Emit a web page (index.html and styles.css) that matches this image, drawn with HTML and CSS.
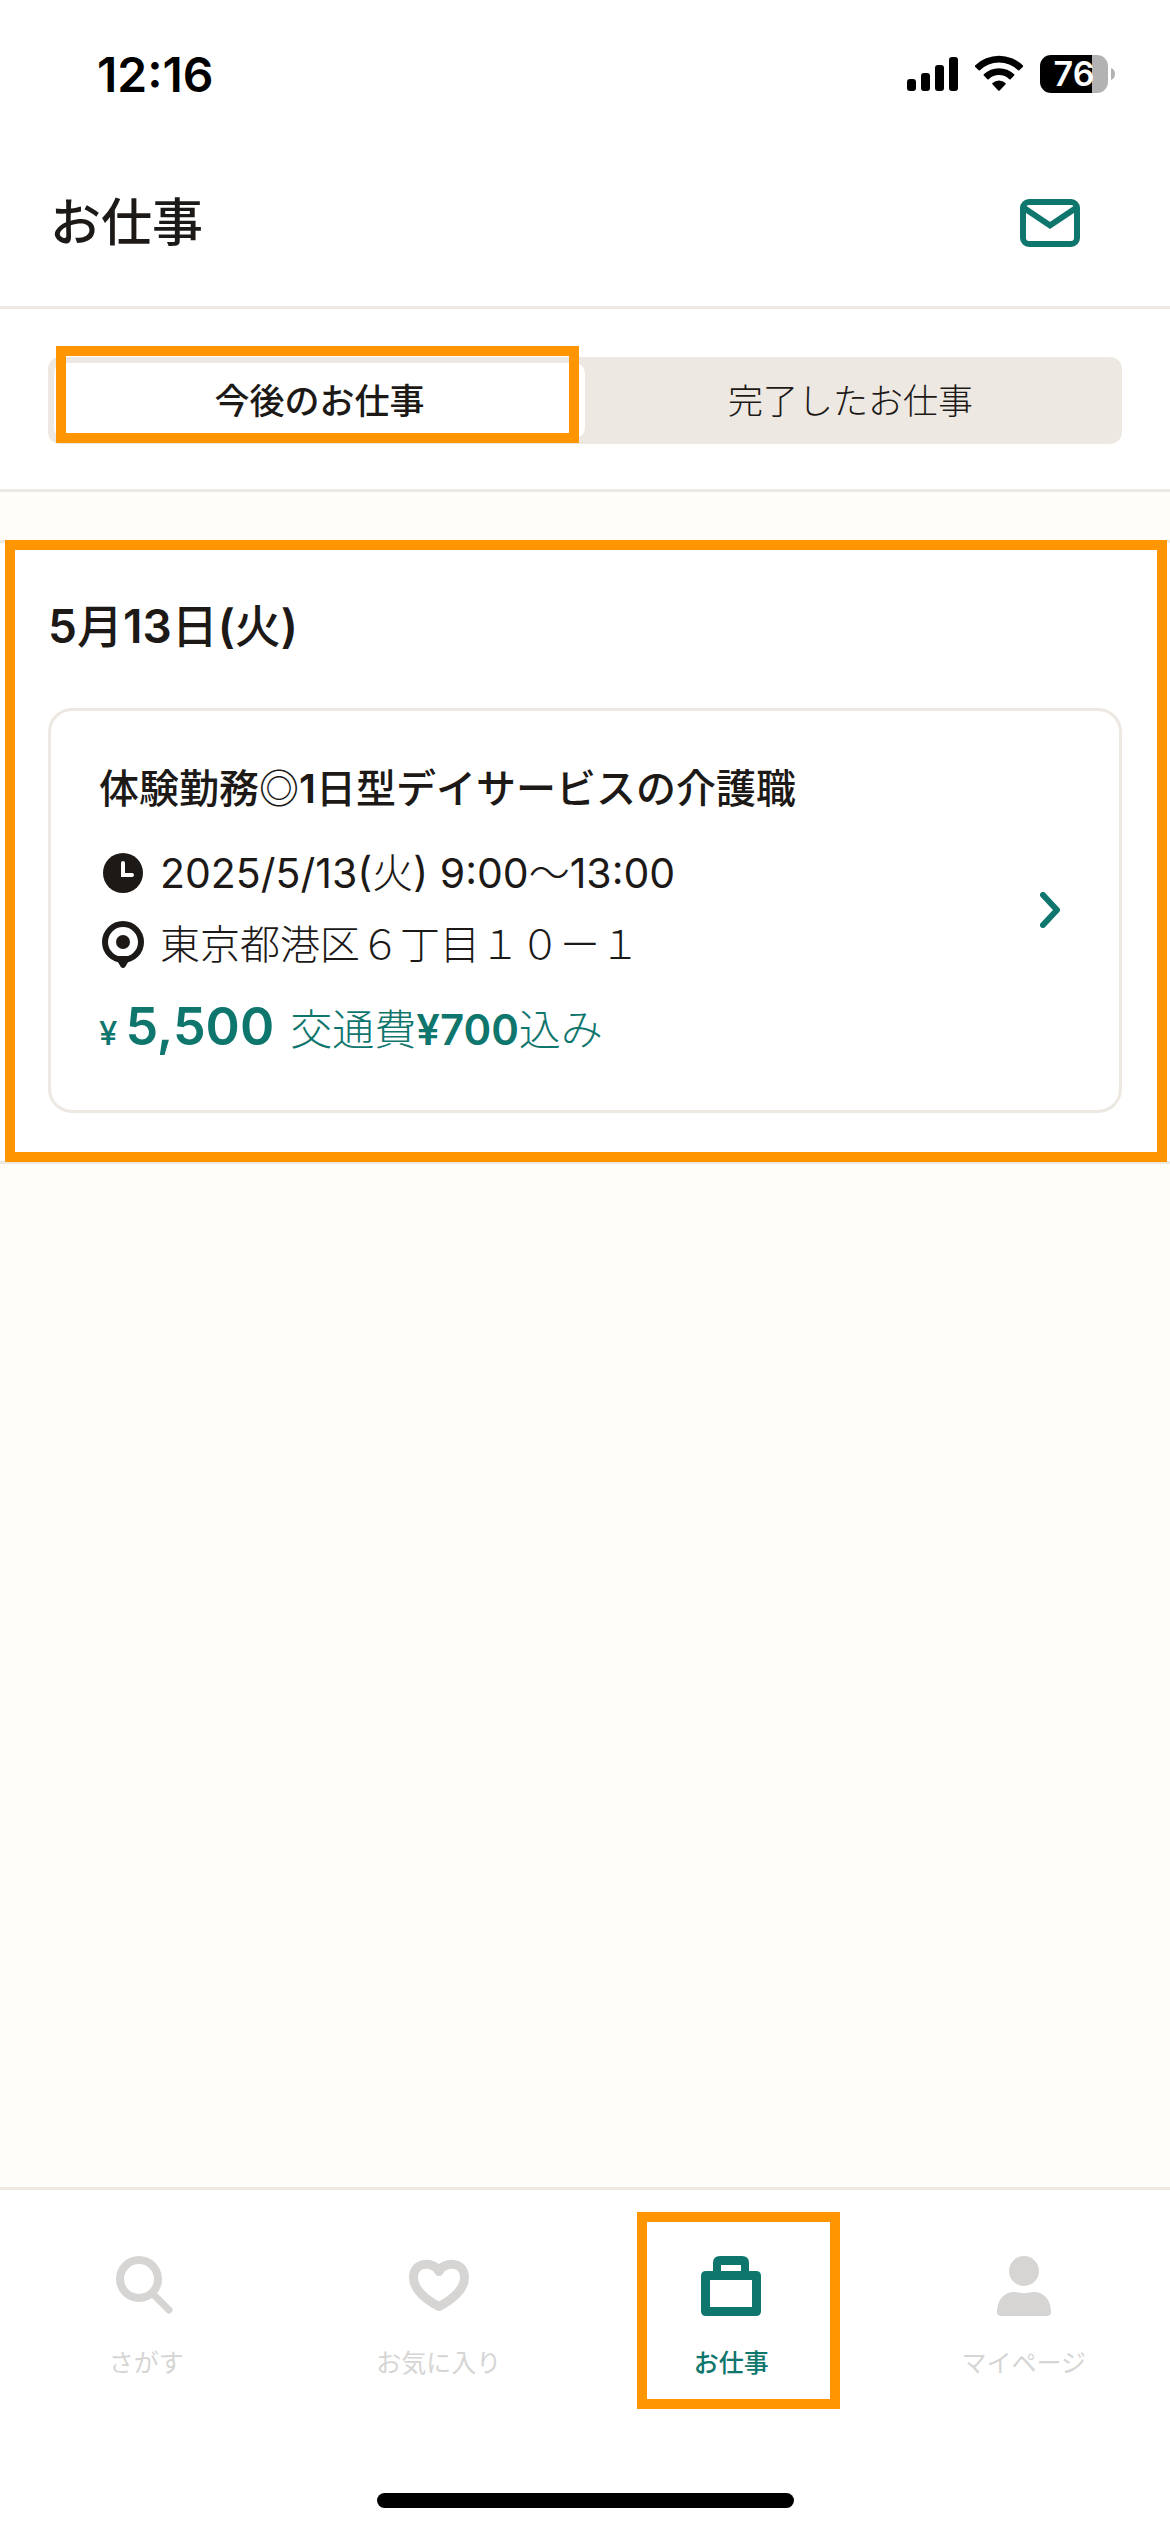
FILE: index.html
```html
<!DOCTYPE html>
<html lang="ja">
<head>
<meta charset="utf-8">
<meta name="viewport" content="width=device-width, initial-scale=1">
<title>お仕事</title>
<link rel="stylesheet" href="styles.css">
</head>
<body>
<div class="app">
  <div class="status-bar">
    <span class="status-time">12:16</span>
    <div class="status-icons">
      <svg class="icon-signal" width="51" height="38" viewBox="0 0 51 38" aria-hidden="true">
        <rect x="0" y="24" width="9" height="12" rx="3"/>
        <rect x="14" y="18" width="9" height="18" rx="3"/>
        <rect x="28" y="10" width="9" height="26" rx="3"/>
        <rect x="42" y="2" width="9" height="34" rx="3"/>
      </svg>
      <svg class="icon-wifi" width="48" height="38" viewBox="0 0 48 38" aria-hidden="true">
        <path d="M0 10.500A34.500 34.500 0 0 1 48 10.500Q48.600 11.200 48 11.800L44.300 15.300Q43.700 15.800 43 15.200A27.500 27.500 0 0 0 5 15.200Q4.300 15.800 3.700 15.300L0 11.800Q-.600 11.200 0 10.500Z"/>
        <path d="M8.800 19.300A22 22 0 0 1 39.200 19.300Q39.800 19.900 39.200 20.500L35.600 24.200Q35 24.700 34.300 24.200A15 15 0 0 0 13.700 24.200Q13 24.700 12.400 24.200L8.800 20.500Q8.200 19.900 8.800 19.300Z"/>
        <path d="M17.500 27.900A9.700 9.700 0 0 1 30.500 27.900Q31.200 28.600 30.600 29.200L24.700 35.500Q24 36.200 23.300 35.500L17.400 29.200Q16.800 28.600 17.500 27.900Z"/>
      </svg>
      <div class="battery">
        <div class="battery-body"><span class="battery-level">76</span></div>
        <svg width="4" height="12" viewBox="0 0 4 12" aria-hidden="true"><path d="M0 0Q4 1.500 4 6T0 12Z" fill="#b2b2b2"/></svg>
      </div>
    </div>
  </div>

  <header class="header">
    <h1 class="page-title">お仕事</h1>
    <button class="mail-button" type="button" aria-label="メッセージ">
      <svg width="60" height="48" viewBox="0 0 60 48" fill="none" stroke="currentColor" stroke-width="6" aria-hidden="true">
        <rect x="3" y="3" width="54" height="42" rx="6"/>
        <path d="M4 9L30 26.500L56 9"/>
      </svg>
    </button>
  </header>

  <div class="tab-area">
    <div class="tabs" role="tablist">
      <button class="tab tab-active" type="button" role="tab" aria-selected="true">今後のお仕事</button>
      <button class="tab" type="button" role="tab" aria-selected="false">完了したお仕事</button>
      <span class="callout callout-tab"></span>
    </div>
  </div>

  <main class="content">
    <section class="day">
      <h2 class="day-title"><b>5</b>月<b>13</b>日<b>(</b>火<b>)</b></h2>
      <a class="job-card" href="#job">
        <div class="job-body">
          <h3 class="job-title">体験勤務<span class="mark">◎</span><b>1</b>日型デイサービスの介護職</h3>
          <p class="job-row job-time">
            <svg class="row-icon" width="42" height="48" viewBox="0 0 42 48" aria-hidden="true">
              <circle cx="21" cy="24" r="20" fill="currentColor"/>
              <path d="M21 14V26H30" fill="none" stroke="#fff" stroke-width="4" stroke-linecap="round"/>
            </svg>
            <span>2025/5/13(<span class="mark">火</span>) 9:00<span class="mark">〜</span>13:00</span>
          </p>
          <p class="job-row">
            <svg class="row-icon" width="42" height="48" viewBox="0 0 42 48" aria-hidden="true">
              <circle cx="21" cy="21" r="18" fill="none" stroke="currentColor" stroke-width="6"/>
              <circle cx="21" cy="21" r="7" fill="currentColor"/>
              <path d="M12 35H30L26 41Q25 43 23.500 45.500Q21 48.500 18.500 45.500Q17 43 16 41Z" fill="currentColor"/>
            </svg>
            <span>東京都港区６丁目１０ー１</span>
          </p>
          <p class="job-pay">
            <span class="pay-amount"><span class="yen">¥</span>5,500</span>
            <span class="pay-note">交通費<b>¥700</b>込み</span>
          </p>
        </div>
        <svg class="chevron" width="20" height="36" viewBox="0 0 20 36" fill="none" stroke="currentColor" stroke-width="6" stroke-linecap="round" stroke-linejoin="round" aria-hidden="true">
          <path d="M3 3L17 18L3 33"/>
        </svg>
      </a>
      <span class="callout callout-day"></span>
    </section>
  </main>

  <nav class="bottom-nav">
    <div class="nav-items">
      <a class="nav-item" href="#search">
        <svg width="60" height="60" viewBox="0 0 60 60" fill="none" stroke="currentColor" stroke-linecap="round" aria-hidden="true">
          <circle cx="23" cy="23" r="19" stroke-width="8"/>
          <path d="M38 39L53 54" stroke-width="7"/>
        </svg>
        <span>さがす</span>
      </a>
      <a class="nav-item" href="#favorites">
        <svg width="60" height="60" viewBox="0 0 60 60" fill="none" stroke="currentColor" stroke-width="9" stroke-linecap="round" stroke-linejoin="round" aria-hidden="true">
          <path d="M30 15.500C26 5.500 4.500 4.500 4.500 21.500C4.500 34 18 44.500 30 50.500C42 44.500 55.500 34 55.500 21.500C55.500 4.500 34 5.500 30 15.500Z"/>
        </svg>
        <span>お気に入り</span>
      </a>
      <a class="nav-item nav-current" href="#jobs" aria-current="page">
        <svg width="60" height="60" viewBox="0 0 60 60" fill="currentColor" fill-rule="evenodd" aria-hidden="true">
          <path d="M12 15V7Q12 0 19 0H41Q48 0 48 7V15H55Q60 15 60 20V55Q60 60 55 60H5Q0 60 0 55V20Q0 15 5 15ZM20 9V15H40V9ZM9 24V51H51V24Z"/>
        </svg>
        <span>お仕事</span>
        <span class="callout callout-nav"></span>
      </a>
      <a class="nav-item" href="#mypage">
        <svg width="60" height="60" viewBox="0 0 60 60" fill="currentColor" aria-hidden="true">
          <circle cx="30" cy="15" r="15"/>
          <path d="M3 56C3 44 10 36 20 36Q22 36 25 36.600Q30 37.800 35 36.600Q38 36 40 36C50 36 57 44 57 56Q57 60 53 60H7Q3 60 3 56Z"/>
        </svg>
        <span>マイページ</span>
      </a>
    </div>
    <div class="home-indicator"></div>
  </nav>
</div>
</body>
</html>
```
FILE: styles.css
```css
:root {
  --ink: #1c1917;
  --line: #ede8e2;
  --teal: #0f766e;
  --muted: #d6d5d4;
  --callout: #ff9500;
}

* { box-sizing: border-box; }

body {
  margin: 0;
  background: #fefdf9;
  color: var(--ink);
  font-family: Inter, "Noto Sans CJK JP", sans-serif;
}

h1, h2, h3, p { margin: 0; }
a { color: inherit; text-decoration: none; }
svg { display: block; flex: none; }

/* Numerals carry more weight than the kanji beside them */
b { font-weight: 600; line-height: 1; }

button {
  border: 0;
  background: none;
  color: inherit;
  font: inherit;
  cursor: pointer;
}

.app {
  display: flex;
  flex-direction: column;
  min-height: 100vh;
}

/* Status bar */
.status-bar {
  display: flex;
  align-items: center;
  justify-content: space-between;
  height: 140px;
  padding: 8px 55px 0 97px;
  background: #fff;
  color: #000;
}
.status-time { font-size: 48px; font-weight: 600; }
.status-icons { display: flex; align-items: center; gap: 17px; }
.battery { display: flex; align-items: center; gap: 3px; }
.battery-body {
  width: 68px;
  height: 38px;
  border-radius: 11px;
  background: linear-gradient(to right, #000 76%, #b2b2b2 76%);
  color: #fff;
  font-size: 34px;
  font-weight: 600;
  line-height: 38px;
  text-align: center;
}

/* Header */
.header {
  display: flex;
  align-items: center;
  justify-content: space-between;
  height: 169px;
  padding: 0 48px 0 50px;
  border-bottom: 3px solid var(--line);
  background: #fff;
}
.page-title { font-size: 51px; font-weight: 500; line-height: 72px; }
.mail-button { padding: 24px 42px; color: var(--teal); }

/* Tabs */
.tab-area {
  padding: 48px 48px 45px;
  border-bottom: 3px solid var(--line);
  background: #fff;
}
.tabs {
  position: relative;
  display: grid;
  grid-template-columns: 1fr 1fr;
  padding: 6px;
  border-radius: 12px;
  background: var(--line);
}
.tab {
  height: 75px;
  padding: 0;
  border-radius: 10px;
  font-size: 35px;
  font-weight: 300;
  line-height: 48px;
}
.tab-active { background: #fff; font-weight: 500; }

/* Annotation frames */
.callout {
  position: absolute;
  border: 10px solid var(--callout);
  pointer-events: none;
}
.callout-tab { inset: -11px 543px 1px 8px; }
.callout-day { inset: -3px 3px -1px 5px; }
.callout-nav { inset: -44px 38px -28px 52px; }

/* Day list */
.content { flex: 1; padding: 48px 0; }
.day {
  position: relative;
  padding: 48px;
  border-top: 3px solid var(--line);
  border-bottom: 3px solid var(--line);
  background: #fff;
}
.day-title {
  margin-bottom: 47px;
  font-size: 46px;
  font-weight: 500;
  line-height: 70px;
}
.job-card {
  display: flex;
  align-items: center;
  justify-content: space-between;
  padding: 48px 59px 49px 48px;
  border: 3px solid var(--line);
  border-radius: 24px;
}
.job-body { display: flex; flex-direction: column; gap: 12px; }
.job-title {
  margin-bottom: 12px;
  font-size: 40px;
  font-weight: 500;
  line-height: 60px;
}
.mark {
  font-family: "Noto Sans CJK JP", sans-serif;
  line-height: 1;
}
.job-row {
  display: flex;
  align-items: center;
  gap: 16px;
  padding-left: 3px;
  font-size: 40px;
  font-weight: 300;
  line-height: 60px;
}
.job-time { font-size: 41px; font-weight: 400; }
.job-time .mark { font-weight: 300; }
.job-pay {
  display: flex;
  align-items: baseline;
  gap: 16px;
  height: 64px;
  margin-top: 10px;
  color: var(--teal);
  line-height: 60px;
}
.pay-amount { font-size: 52px; font-weight: 600; }
.yen { margin-right: 8px; font-size: 33px; font-weight: 500; line-height: 1; }
.pay-note { font-size: 42px; font-weight: 300; }
.chevron { color: var(--teal); }

/* Bottom navigation */
.bottom-nav {
  padding: 66px 0 24px;
  border-top: 3px solid var(--line);
  background: #fff;
}
.nav-items { display: grid; grid-template-columns: repeat(4, 1fr); }
.nav-item {
  position: relative;
  display: flex;
  flex-direction: column;
  align-items: center;
  gap: 29px;
  color: var(--muted);
  font-size: 25px;
  font-weight: 400;
  line-height: 36px;
}
.nav-current { color: var(--teal); font-weight: 500; }
.home-indicator {
  width: 417px;
  height: 15px;
  margin: 112px auto 0;
  border-radius: 8px;
  background: #000;
}
```
